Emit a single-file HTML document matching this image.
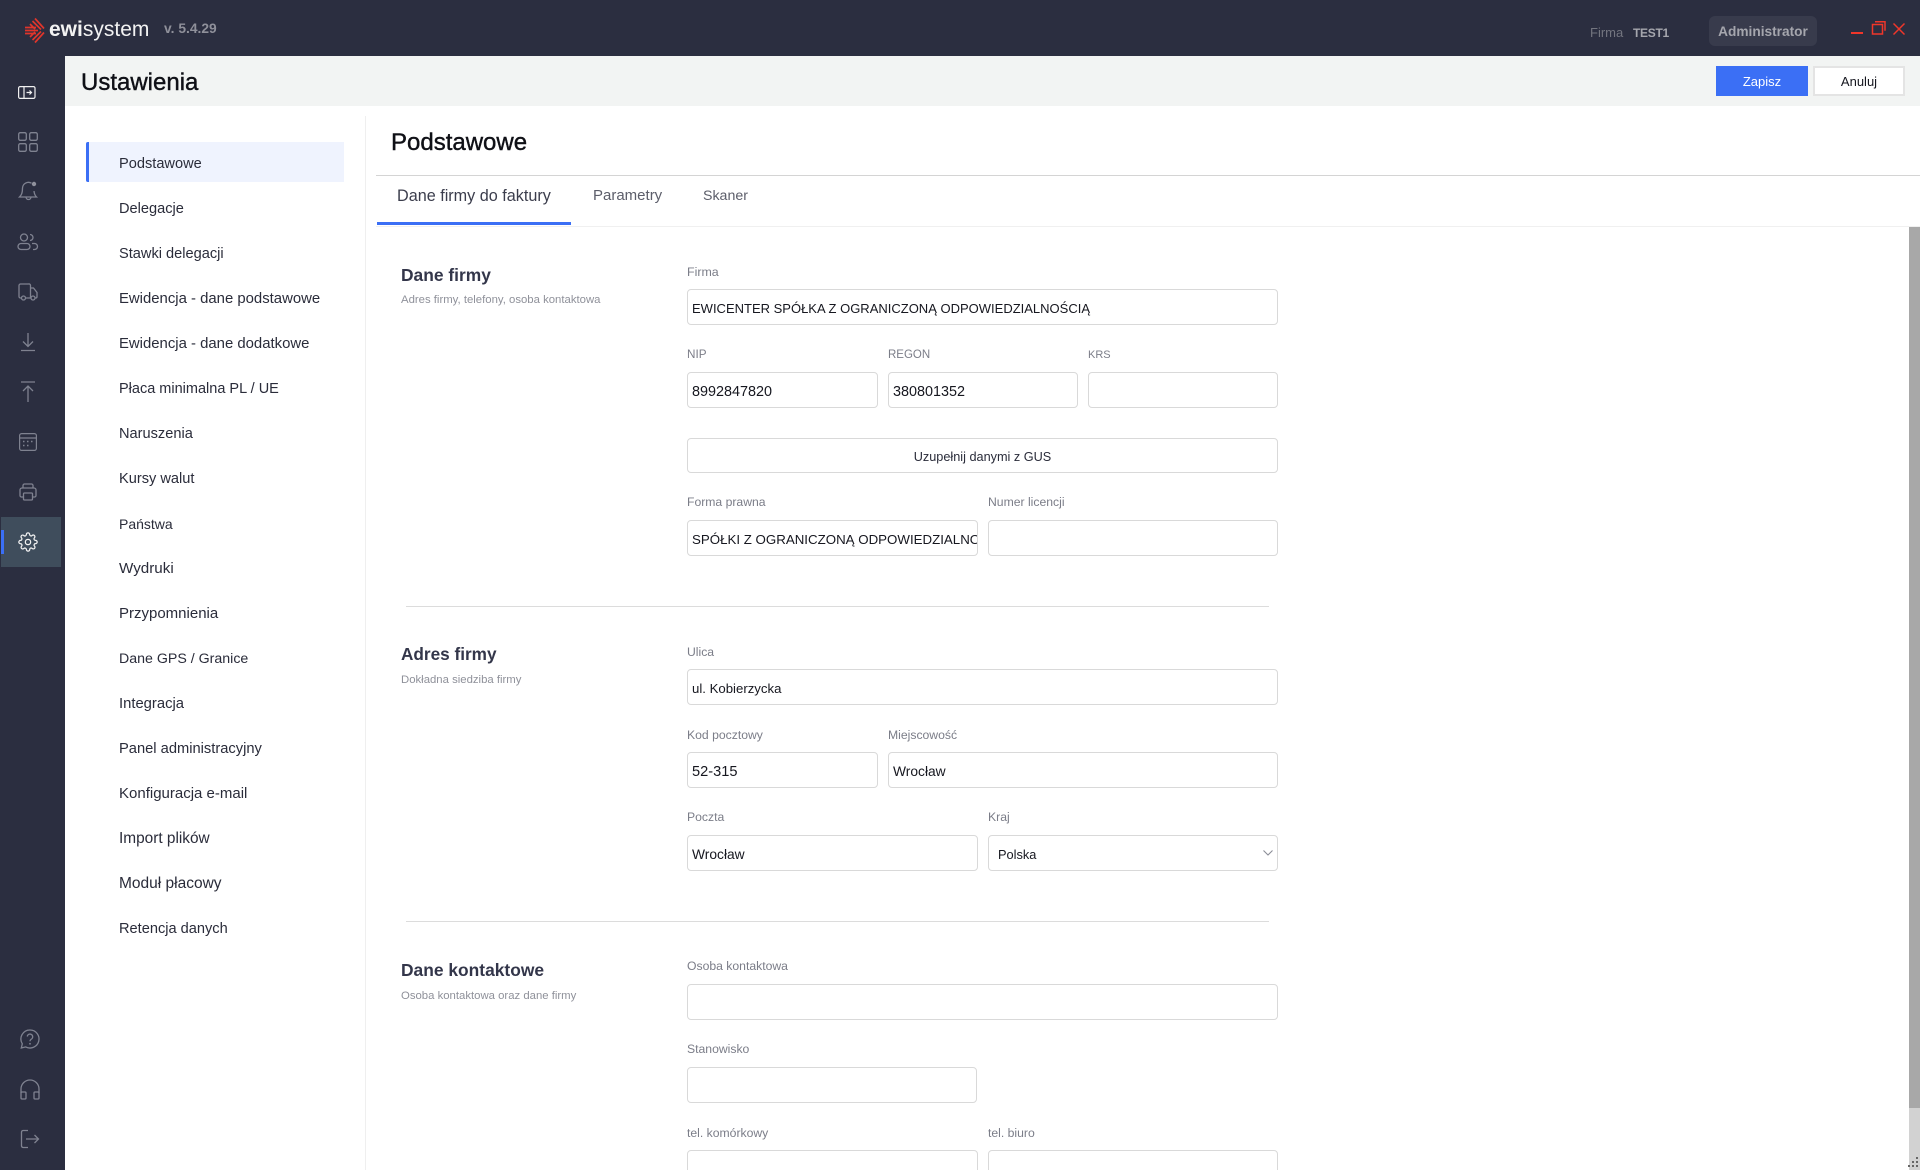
<!DOCTYPE html>
<html lang="pl">
<head>
<meta charset="utf-8">
<title>Ustawienia</title>
<style>
html,body{margin:0;padding:0;width:1920px;height:1170px;overflow:hidden;background:#fff;}
body{position:relative;font-family:"Liberation Sans","Noto Sans CJK JP",sans-serif;color:#1e2030;}
.a{position:absolute;white-space:nowrap;}
.nav{position:absolute;left:119px;font-size:14.600px;line-height:20px;color:#2a2c3a;white-space:nowrap;margin-top:1px;}
.lb{position:absolute;font-size:12.200px;line-height:16px;color:#7b7d88;white-space:nowrap;}
.in{position:absolute;box-sizing:border-box;height:36px;border:1px solid #d9d9d9;border-radius:4px;background:#fff;font-size:13px;line-height:36px;padding:1px 0 0 4px;color:#16171f;overflow:hidden;white-space:nowrap;}
.h{position:absolute;left:401px;font-size:17.400px;line-height:24px;font-weight:bold;color:#33364a;white-space:nowrap;}
.s{position:absolute;left:401px;font-size:11.350px;line-height:14px;color:#8f919a;white-space:nowrap;}
.hr{position:absolute;left:406px;width:863px;height:1px;background:#dcdcdc;}
svg{position:absolute;overflow:visible;fill:none;}
</style>
</head>
<body>
<!-- top bar -->
<div class="a" style="left:0;top:0;width:1920px;height:56px;background:#2b2e40;"></div>
<svg style="left:25px;top:18px" width="20" height="26" viewBox="0 0 20 26" stroke="#e0352b" stroke-width="1.700">
<path d="M10 .5l9 10M7.500 3l8.500 8.500M5 6l5 5M10 24.500l9-10M7.500 22l8.500-8.500M5 19l5-5M0 9.500h11M0 12.500h13M0 15.500h11"/>
</svg>
<div class="a" style="left:49px;top:17px;font-size:21px;line-height:26px;color:#f2f2f2;"><b>ewi</b>system</div>
<div class="a" style="left:164px;top:21px;font-size:13.800px;line-height:16px;font-weight:bold;color:#8f909a;">v. 5.4.29</div>
<div class="a" style="left:1590px;top:25px;font-size:13px;line-height:16px;color:#73757f;">Firma</div>
<div class="a" style="left:1633px;top:25px;font-size:12px;letter-spacing:-.3px;line-height:16px;font-weight:bold;color:#a5a6ad;">TEST1</div>
<div class="a" style="left:1709px;top:16px;width:108px;height:30px;border-radius:6px;background:#383b4c;color:#a5a6ad;font-size:13.700px;font-weight:bold;line-height:31px;text-align:center;">Administrator</div>
<svg style="left:1851px;top:20px" width="56" height="16" viewBox="0 0 56 16" stroke="#f0362a" stroke-width="1.500">
<path d="M0 13h12" stroke-width="2"/>
<rect x="21.500" y="4.500" width="10" height="9.500"/>
<path d="M24 1.700h10v9"/>
<path d="M42.500 3.500l11 11M53.500 3.500l-11 11"/>
</svg>

<!-- sidebar -->
<div class="a" style="left:0;top:56px;width:65px;height:1114px;background:#2b2e40;"></div>
<div class="a" style="left:1px;top:517px;width:60px;height:50px;background:#3f4d5c;"></div>
<div class="a" style="left:1px;top:530px;width:3px;height:24px;background:#3b6ff5;"></div>

<svg style="left:18px;top:86px" width="20" height="14" viewBox="0 0 20 14" stroke="#f0f0f0" stroke-width="1.200">
<rect x=".6" y=".6" width="16.400" height="11.800" rx="1.500"/><path d="M6 .6v11.800M8.500 6.500h5M11.500 4.500l2 2-2 2"/>
</svg>
<svg style="left:18px;top:132px" width="20" height="20" viewBox="0 0 20 20" stroke="#7f8290" stroke-width="1.300">
<rect x=".7" y=".7" width="7.600" height="7.600" rx="1.500"/><rect x="11.700" y=".7" width="7.600" height="7.600" rx="1.500"/><rect x=".7" y="11.700" width="7.600" height="7.600" rx="1.500"/><rect x="11.700" y="11.700" width="7.600" height="7.600" rx="1.500"/>
</svg>
<svg style="left:19px;top:181px" width="20" height="20" viewBox="0 0 20 20" stroke="#7f8290" stroke-width="1.300">
<path d="M12.500 2.200A6 6 0 0 0 3.500 7c0 5-1 7-3 9h17c-1.600-1.600-2.300-3.500-2.500-6M7 16a2.500 2.500 0 0 0 5 0"/><circle cx="15" cy="3" r="2.200" fill="#8f919c" stroke="none"/>
</svg>
<svg style="left:17px;top:233px" width="22" height="18" viewBox="0 0 22 18" stroke="#7f8290" stroke-width="1.300">
<circle cx="7" cy="4.500" r="3.500"/><path d="M13 1.500a3 3 0 0 1 0 6"/><rect x="1" y="10.500" width="12" height="6" rx="3"/><path d="M15 10.500h2.500a3 3 0 0 1 0 6H16"/>
</svg>
<svg style="left:18px;top:283px" width="21" height="18" viewBox="0 0 21 18" stroke="#7f8290" stroke-width="1.300">
<path d="M3 15H2.500A1.500 1.500 0 0 1 1 13.500V2.500A1.500 1.500 0 0 1 2.500 1h8A1.500 1.500 0 0 1 12.500 2.500V15H8M12.500 5h3l3.500 4.500v4A1.500 1.500 0 0 1 18 15h-1"/><circle cx="5.500" cy="15" r="2"/><circle cx="15" cy="15" r="2"/>
</svg>
<svg style="left:20px;top:332px" width="16" height="20" viewBox="0 0 16 20" stroke="#7f8290" stroke-width="1.300">
<path d="M8 1v13M3 9.500L8 14.500l5-5M1 18.500h14"/>
</svg>
<svg style="left:20px;top:381px" width="16" height="22" viewBox="0 0 16 22" stroke="#7f8290" stroke-width="1.300">
<path d="M1 1h14M8 21V5M3 10l5-5 5 5"/>
</svg>
<svg style="left:19px;top:433px" width="18" height="18" viewBox="0 0 18 18" stroke="#7f8290" stroke-width="1.200">
<rect x=".6" y=".6" width="16.800" height="16.800" rx="2"/><path d="M.6 5h16.800"/><path d="M4 8.500h1.500M8 8.500h1.500M12 8.500h1.500M4 12.500h1.500M8 12.500h1.500" stroke-width="1.600"/>
</svg>
<svg style="left:19px;top:483px" width="18" height="18" viewBox="0 0 18 18" stroke="#7f8290" stroke-width="1.300">
<path d="M4 5V2.500A1.500 1.500 0 0 1 5.500 1h7A1.500 1.500 0 0 1 14 2.500V5M4 14H2.500A1.500 1.500 0 0 1 1 12.500V7a2 2 0 0 1 2-2h12a2 2 0 0 1 2 2v5.500a1.500 1.500 0 0 1-1.500 1.500H14"/><rect x="4.500" y="10" width="9" height="7" rx="1"/>
</svg>
<svg style="left:18px;top:532px" width="20" height="20" viewBox="0 0 24 24" stroke="#f2f2f2" stroke-width="1.500">
<circle cx="12" cy="12" r="3.200"/>
<path d="M19.400 15a1.650 1.650 0 0 0 .33 1.820l.06.06a2 2 0 1 1-2.830 2.830l-.06-.06a1.650 1.650 0 0 0-1.820-.33 1.650 1.650 0 0 0-1 1.510V21a2 2 0 1 1-4 0v-.09a1.650 1.650 0 0 0-1.080-1.510 1.650 1.650 0 0 0-1.820.33l-.06.06a2 2 0 1 1-2.830-2.830l.06-.06a1.650 1.650 0 0 0 .33-1.820 1.650 1.650 0 0 0-1.510-1H3a2 2 0 1 1 0-4h.09a1.650 1.650 0 0 0 1.510-1.080 1.650 1.650 0 0 0-.33-1.820l-.06-.06a2 2 0 1 1 2.830-2.830l.06.06a1.650 1.650 0 0 0 1.820.33h.08a1.650 1.650 0 0 0 1-1.510V3a2 2 0 1 1 4 0v.09a1.650 1.650 0 0 0 1 1.510 1.650 1.650 0 0 0 1.820-.33l.06-.06a2 2 0 1 1 2.830 2.830l-.06.06a1.650 1.650 0 0 0-.33 1.820v.08a1.650 1.650 0 0 0 1.510 1H21a2 2 0 1 1 0 4h-.09a1.650 1.650 0 0 0-1.510 1z"/>
</svg>
<svg style="left:20px;top:1029px" width="20" height="20" viewBox="0 0 20 20" stroke="#7f8290" stroke-width="1.300">
<path d="M10 1a9 9 0 1 1-4.300 16.900L1.300 19l1-4.200A9 9 0 0 1 10 1z"/><path d="M7.300 7.500A2.700 2.700 0 1 1 11.500 10c-1 .6-1.500 1.100-1.500 2.200"/><circle cx="10" cy="14.800" r=".9" fill="#7f8290" stroke="none"/>
</svg>
<svg style="left:20px;top:1080px" width="20" height="20" viewBox="0 0 20 20" stroke="#7f8290" stroke-width="1.300">
<path d="M1 13V9a9 9 0 0 1 18 0v4"/><rect x="1" y="12" width="5" height="7" rx="1"/><rect x="14" y="12" width="5" height="7" rx="1"/>
</svg>
<svg style="left:20px;top:1129px" width="20" height="20" viewBox="0 0 20 20" stroke="#7f8290" stroke-width="1.300">
<path d="M8 1.500H3A1.800 1.800 0 0 0 1.500 3v14A1.800 1.800 0 0 0 3 18.500h5M6 10h12.500M14.500 6l4 4-4 4"/>
</svg>

<!-- header band -->
<div class="a" style="left:65px;top:56px;width:1855px;height:50px;background:#f2f4f3;"></div>
<div class="a" style="left:81px;top:68px;font-size:24px;line-height:30px;color:#0f1016;-webkit-text-stroke:.4px #0f1016;">Ustawienia</div>
<div class="a" style="left:1716px;top:66px;width:92px;height:30px;background:#3b6ff5;color:#fff;font-size:13px;line-height:32px;text-align:center;">Zapisz</div>
<div class="a" style="left:1813px;top:66px;width:88px;height:26px;border:2px solid #e4e4e4;background:#fff;color:#16171f;font-size:13px;line-height:28px;text-align:center;">Anuluj</div>

<!-- left nav -->
<div class="a" style="left:86px;top:142px;width:258px;height:40px;background:#eff3fe;"></div>
<div class="a" style="left:86px;top:142px;width:3px;height:40px;background:#3b6ff5;border-radius:2px 0 0 2px;"></div>
<div class="nav" style="top:153px">Podstawowe</div>
<div class="nav" style="top:198px">Delegacje</div>
<div class="nav" style="top:243px">Stawki delegacji</div>
<div class="nav" style="top:288px;font-size:14.900px">Ewidencja - dane podstawowe</div>
<div class="nav" style="top:333px;font-size:14.900px">Ewidencja - dane dodatkowe</div>
<div class="nav" style="top:378px;font-size:14.500px">Płaca minimalna PL / UE</div>
<div class="nav" style="top:423px">Naruszenia</div>
<div class="nav" style="top:468px">Kursy walut</div>
<div class="nav" style="top:513px;font-size:14px">Państwa</div>
<div class="nav" style="top:558px;font-size:15.200px">Wydruki</div>
<div class="nav" style="top:603px;font-size:15px">Przypomnienia</div>
<div class="nav" style="top:648px;font-size:14.200px">Dane GPS / Granice</div>
<div class="nav" style="top:693px;font-size:14.800px">Integracja</div>
<div class="nav" style="top:738px;font-size:14.700px">Panel administracyjny</div>
<div class="nav" style="top:783px;font-size:15px">Konfiguracja e-mail</div>
<div class="nav" style="top:828px;font-size:15.400px">Import plików</div>
<div class="nav" style="top:873px;font-size:15.500px">Moduł płacowy</div>
<div class="nav" style="top:918px">Retencja danych</div>

<div class="a" style="left:365px;top:116px;width:1px;height:1054px;background:#efefef;"></div>

<!-- content head -->
<div class="a" style="left:391px;top:128px;font-size:24px;line-height:30px;color:#0f1016;-webkit-text-stroke:.4px #0f1016;">Podstawowe</div>
<div class="a" style="left:376px;top:175px;width:1544px;height:1px;background:#d4d4d4;"></div>
<div class="a" style="left:397px;top:185px;font-size:16.200px;line-height:22px;color:#3b3d4c;">Dane firmy do faktury</div>
<div class="a" style="left:593px;top:185px;font-size:15px;line-height:22px;color:#5c5e6a;">Parametry</div>
<div class="a" style="left:703px;top:185px;font-size:14.200px;line-height:22px;color:#5c5e6a;">Skaner</div>
<div class="a" style="left:377px;top:222px;width:194px;height:3px;background:#3b6ff5;"></div>
<div class="a" style="left:376px;top:226px;width:1544px;height:1px;background:#f0f0f0;"></div>

<!-- scrollbar -->
<div class="a" style="left:1909px;top:227px;width:11px;height:943px;background:#d2d2d2;"></div>
<div class="a" style="left:1909px;top:227px;width:11px;height:881px;background:#a8a8a8;"></div>
<svg style="left:1908px;top:1157px" width="12" height="13" viewBox="0 0 12 13">
<rect x="8" y="0" width="2" height="2" fill="#666"/><rect x="4" y="4" width="2" height="2" fill="#666"/><rect x="8" y="4" width="2" height="2" fill="#666"/><rect x="0" y="8" width="2" height="2" fill="#666"/><rect x="4" y="8" width="2" height="2" fill="#666"/><rect x="8" y="8" width="2" height="2" fill="#666"/>
</svg>

<!-- Dane firmy -->
<div class="h" style="top:263px">Dane firmy</div>
<div class="s" style="top:293px">Adres firmy, telefony, osoba kontaktowa</div>
<div class="lb" style="left:687px;top:264px;font-size:12.400px">Firma</div>
<div class="in" style="left:687px;top:289px;width:591px">EWICENTER SPÓŁKA Z OGRANICZONĄ ODPOWIEDZIALNOŚCIĄ</div>
<div class="lb" style="left:687px;top:347px;font-size:11.700px">NIP</div>
<div class="in" style="left:687px;top:372px;width:191px;font-size:14.400px">8992847820</div>
<div class="lb" style="left:888px;top:347px;font-size:11.500px">REGON</div>
<div class="in" style="left:888px;top:372px;width:190px;font-size:14.400px">380801352</div>
<div class="lb" style="left:1088px;top:347px;font-size:11px">KRS</div>
<div class="in" style="left:1088px;top:372px;width:190px"></div>
<div class="in" style="left:687px;top:438px;width:591px;height:35px;text-align:center;padding:1px 0 0;font-size:12.700px;line-height:35px;color:#2a2c3a">Uzupełnij danymi z GUS</div>
<div class="lb" style="left:687px;top:494px">Forma prawna</div>
<div class="in" style="left:687px;top:520px;width:291px;padding-right:2px;font-size:13.300px">SPÓŁKI Z OGRANICZONĄ ODPOWIEDZIALNOŚCIĄ</div>
<div class="lb" style="left:988px;top:494px">Numer licencji</div>
<div class="in" style="left:988px;top:520px;width:290px"></div>
<div class="hr" style="top:606px"></div>

<!-- Adres firmy -->
<div class="h" style="top:642px;font-size:17.200px">Adres firmy</div>
<div class="s" style="top:673px">Dokładna siedziba firmy</div>
<div class="lb" style="left:687px;top:644px">Ulica</div>
<div class="in" style="left:687px;top:669px;width:591px;font-size:13.200px">ul. Kobierzycka</div>
<div class="lb" style="left:687px;top:727px">Kod pocztowy</div>
<div class="in" style="left:687px;top:752px;width:191px;font-size:14.600px">52-315</div>
<div class="lb" style="left:888px;top:727px">Miejscowość</div>
<div class="in" style="left:888px;top:752px;width:390px;font-size:13.800px">Wrocław</div>
<div class="lb" style="left:687px;top:809px">Poczta</div>
<div class="in" style="left:687px;top:835px;width:291px;font-size:13.800px">Wrocław</div>
<div class="lb" style="left:988px;top:809px">Kraj</div>
<div class="in" style="left:988px;top:835px;width:290px;padding-left:9px;font-size:12.800px">Polska</div>
<svg style="left:1263px;top:850px" width="10" height="6" viewBox="0 0 10 6" stroke="#8a8c96" stroke-width="1.100"><path d="M.5.5L5 5 9.500.5"/></svg>
<div class="hr" style="top:921px"></div>

<!-- Dane kontaktowe -->
<div class="h" style="top:958px">Dane kontaktowe</div>
<div class="s" style="top:989px">Osoba kontaktowa oraz dane firmy</div>
<div class="lb" style="left:687px;top:958px">Osoba kontaktowa</div>
<div class="in" style="left:687px;top:984px;width:591px"></div>
<div class="lb" style="left:687px;top:1041px">Stanowisko</div>
<div class="in" style="left:687px;top:1067px;width:290px"></div>
<div class="lb" style="left:687px;top:1125px">tel. komórkowy</div>
<div class="in" style="left:687px;top:1150px;width:291px"></div>
<div class="lb" style="left:988px;top:1125px">tel. biuro</div>
<div class="in" style="left:988px;top:1150px;width:290px"></div>
</body>
</html>
